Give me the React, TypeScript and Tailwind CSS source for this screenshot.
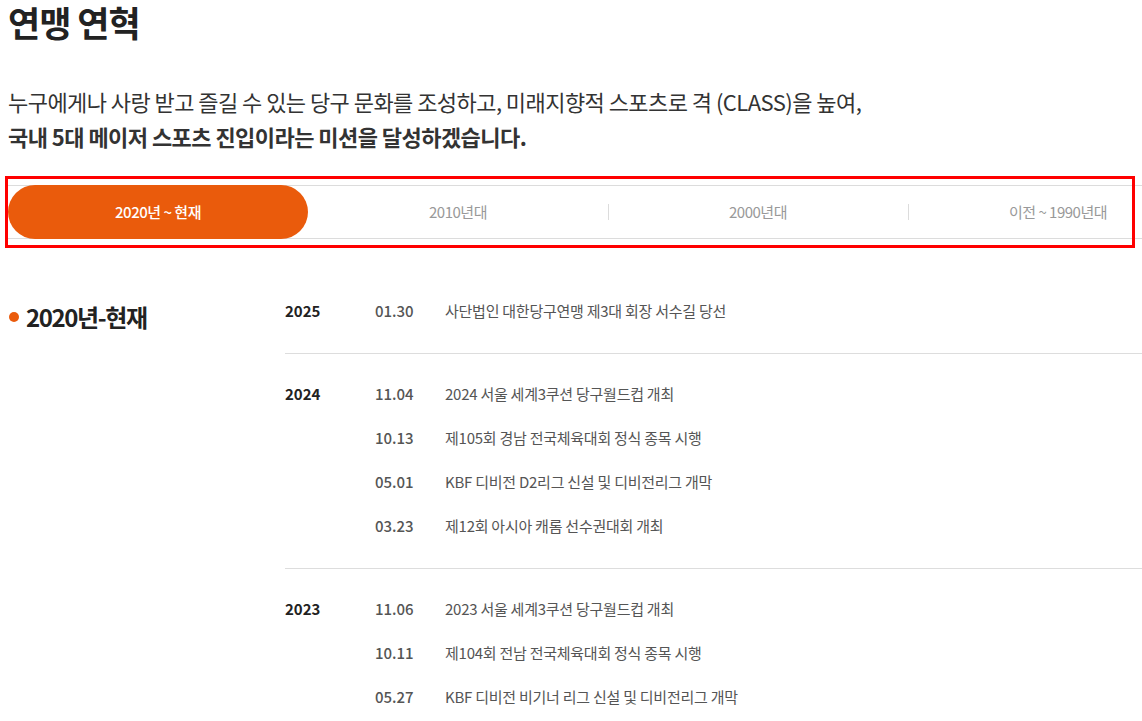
import React from "react";

const font = { fontFamily: '"Noto Sans CJK KR", "Noto Sans", sans-serif' };

const groups = [
  {
    year: "2025",
    items: [["01.30", "사단법인 대한당구연맹 제3대 회장 서수길 당선"]],
  },
  {
    year: "2024",
    items: [
      ["11.04", "2024 서울 세계3쿠션 당구월드컵 개최"],
      ["10.13", "제105회 경남 전국체육대회 정식 종목 시행"],
      ["05.01", "KBF 디비전 D2리그 신설 및 디비전리그 개막"],
      ["03.23", "제12회 아시아 캐롬 선수권대회 개최"],
    ],
  },
  {
    year: "2023",
    items: [
      ["11.06", "2023 서울 세계3쿠션 당구월드컵 개최"],
      ["10.11", "제104회 전남 전국체육대회 정식 종목 시행"],
      ["05.27", "KBF 디비전 비기너 리그 신설 및 디비전리그 개막"],
      ["03.10", "제11회 아시아 캐롬 선수권대회 개최"],
    ],
  },
];

const tabs = ["2020년 ~ 현재", "2010년대", "2000년대", "이전 ~ 1990년대"];

export default function App() {
  return (
    <div className="relative w-[1142px] h-[721px] overflow-hidden bg-white" style={font}>
      <div className="w-[1200px] ml-2">
        <h1 className="text-[35px] leading-[44px] font-bold text-[#222] tracking-[-1px]">연맹 연혁</h1>
        <div className="mt-[40px] text-[22px] leading-[35px] text-[#333] tracking-[-0.55px]">
          <p className="font-normal">누구에게나 사랑 받고 즐길 수 있는 당구 문화를 조성하고, 미래지향적 스포츠로 격 (CLASS)을 높여,</p>
          <p className="font-bold">국내 5대 메이저 스포츠 진입이라는 미션을 달성하겠습니다.</p>
        </div>
        <div className="mt-[31px] flex border-y border-[#dcdcdc] h-[54px]">
          {tabs.map((t, i) => (
            <div key={t} className="relative flex-1 flex items-center justify-center">
              {i === 0 ? (
                <div className="absolute -inset-y-px inset-x-0 rounded-full bg-[#ea5b0c] flex items-center justify-center text-white text-[15px] font-medium tracking-[-0.5px]">
                  {t}
                </div>
              ) : (
                <span className="text-[15px] text-[#999] tracking-[-0.5px]">{t}</span>
              )}
              {i >= 2 && <span className="absolute left-0 top-1/2 -translate-y-1/2 h-[16px] w-px bg-[#dcdcdc]" />}
            </div>
          ))}
        </div>
        <div className="mt-[50px] flex">
          <div className="w-[277px] shrink-0 flex items-center gap-[7px] h-[56px]">
            <span className="w-[10px] h-[10px] rounded-full bg-[#ea5b0c] ml-[1px]" />
            <span className="text-[24px] font-bold text-[#222] tracking-[-1.4px]">2020년-현재</span>
          </div>
          <div className="flex-1">
            {groups.map((g, gi) => (
              <div key={g.year} className={`flex pt-[18px] pb-[20px] ${gi < groups.length - 1 ? "border-b border-[#dddddd]" : ""} ${gi === 0 ? "-mt-[18px]" : ""}`}>
                <div className="w-[90px] shrink-0 text-[15px] leading-[44px] font-bold text-[#222]">{g.year}</div>
                <div className="flex-1">
                  {g.items.map(([d, t]) => (
                    <div key={d} className="flex h-[44px] items-center">
                      <span className="w-[70px] shrink-0 text-[15px] font-medium text-[#555]">{d}</span>
                      <span className="text-[15px] text-[#555] tracking-[-0.25px]">{t}</span>
                    </div>
                  ))}
                </div>
              </div>
            ))}
          </div>
        </div>
      </div>
      <div className="absolute left-[5px] top-[176px] w-[1130px] h-[72px] border-[3px] border-[#ff0000] pointer-events-none" />
    </div>
  );
}
